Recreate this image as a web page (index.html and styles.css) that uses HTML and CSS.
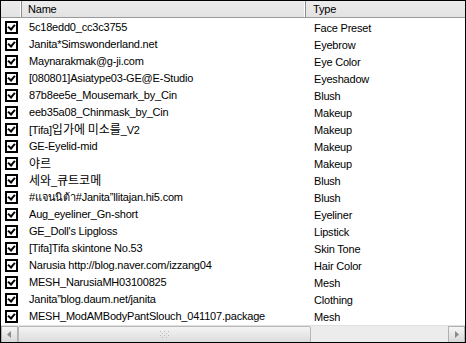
FILE: index.html
```html
<!DOCTYPE html>
<html lang="en">
<head>
    <meta charset="UTF-8">
    <title>Package list</title>
    <link rel="stylesheet" href="styles.css">
</head>
<body>
    <div class="listview">
        <div class="header">
            <div class="col col-check"></div>
            <div class="col col-name">Name</div>
            <div class="col col-type">Type</div>
        </div>

        <div class="rows">
            <div class="row"><span class="box"></span><span class="name">5c18edd0_cc3c3755</span><span class="type">Face Preset</span></div>
            <div class="row"><span class="box"></span><span class="name">Janita*Simswonderland.net</span><span class="type">Eyebrow</span></div>
            <div class="row"><span class="box"></span><span class="name">Maynarakmak@g-ji.com</span><span class="type">Eye Color</span></div>
            <div class="row"><span class="box"></span><span class="name">[080801]Asiatype03-GE@E-Studio</span><span class="type">Eyeshadow</span></div>
            <div class="row"><span class="box"></span><span class="name">87b8ee5e_Mousemark_by_Cin</span><span class="type">Blush</span></div>
            <div class="row"><span class="box"></span><span class="name">eeb35a08_Chinmask_by_Cin</span><span class="type">Makeup</span></div>
            <div class="row"><span class="box"></span><span class="name">[Tifa]<span class="ko">입가에 미소를</span>_V2</span><span class="type">Makeup</span></div>
            <div class="row"><span class="box"></span><span class="name">GE-Eyelid-mid</span><span class="type">Makeup</span></div>
            <div class="row"><span class="box"></span><span class="name"><span class="ko">야르</span></span><span class="type">Makeup</span></div>
            <div class="row"><span class="box"></span><span class="name"><span class="ko">세와</span>_<span class="ko">큐트코메</span></span><span class="type">Blush</span></div>
            <div class="row"><span class="box"></span><span class="name">#แจนนิต้า#Janita”llitajan.hi5.com</span><span class="type">Blush</span></div>
            <div class="row"><span class="box"></span><span class="name">Aug_eyeliner_Gn-short</span><span class="type">Eyeliner</span></div>
            <div class="row"><span class="box"></span><span class="name">GE_Doll's Lipgloss</span><span class="type">Lipstick</span></div>
            <div class="row"><span class="box"></span><span class="name">[Tifa]Tifa skintone No.53</span><span class="type">Skin Tone</span></div>
            <div class="row"><span class="box"></span><span class="name">Narusia http://blog.naver.com/izzang04</span><span class="type">Hair Color</span></div>
            <div class="row"><span class="box"></span><span class="name">MESH_NarusiaMH03100825</span><span class="type">Mesh</span></div>
            <div class="row"><span class="box"></span><span class="name">Janita”blog.daum.net/janita</span><span class="type">Clothing</span></div>
            <div class="row"><span class="box"></span><span class="name">MESH_ModAMBodyPantSlouch_041107.package</span><span class="type">Mesh</span></div>
        </div>

        <div class="hscroll">
            <div class="sbtn">
                <svg width="17" height="17" viewBox="0 0 17 17"><path d="M10 5 L6 8.5 L10 12 Z" fill="#8a8a8a"/></svg>
            </div>
            <div class="thumb">
                <svg width="9" height="8" viewBox="0 0 9 8">
                    <g fill="#b8b8b8">
                        <rect x="0" y="0" width="1" height="1"/><rect x="4" y="0" width="1" height="1"/><rect x="8" y="0" width="1" height="1"/>
                        <rect x="2" y="2" width="1" height="1"/><rect x="6" y="2" width="1" height="1"/>
                        <rect x="0" y="4" width="1" height="1"/><rect x="4" y="4" width="1" height="1"/><rect x="8" y="4" width="1" height="1"/>
                        <rect x="2" y="6" width="1" height="1"/><rect x="6" y="6" width="1" height="1"/>
                    </g>
                </svg>
            </div>
            <div class="track"></div>
            <div class="sbtn">
                <svg width="17" height="17" viewBox="0 0 17 17"><path d="M7 5 L11 8.5 L7 12 Z" fill="#8a8a8a"/></svg>
            </div>
        </div>
    </div>
</body>
</html>
```

FILE: styles.css
```css
body {
    margin: 0;
    background: #fff;
    font-family: "Liberation Sans", Arial, "Noto Sans CJK KR", sans-serif;
    font-size: 11px;
    letter-spacing: -0.2px;
    color: #000;
}
.listview {
    width: 466px;
    height: 343px;
    box-sizing: border-box;
    border: 1px solid #000;
    display: flex;
    flex-direction: column;
    overflow: hidden;
}
.header {
    display: grid;
    grid-template-columns: 21px 284px 1fr;
    height: 17px;
    box-sizing: border-box;
    background: linear-gradient(#ececec, #e2e2e2);
    border-bottom: 1px solid #9a9a9a;
    flex: none;
}
.col {
    line-height: 16px;
    padding-left: 6px;
    border-right: 1px solid #8c8c8c;
    box-shadow: inset -1px 0 0 #fff;
    white-space: nowrap;
}
.col-check {
    padding-left: 0;
}
.col-type {
    padding-left: 7px;
    border-right: none;
    box-shadow: none;
}
.rows {
    flex: 1;
    padding-top: 1px;
}
.row {
    display: grid;
    grid-template-columns: 22px 284px 1fr;
    height: 17px;
    align-items: center;
    white-space: nowrap;
}
.box {
    width: 9px;
    height: 9px;
    margin-left: 4px;
    border: 2px solid #000;
    background: #fff;
    position: relative;
}
.box::after {
    content: "";
    position: absolute;
    left: 1px;
    top: 0;
    width: 3px;
    height: 5px;
    border-right: 2px solid #000;
    border-bottom: 2px solid #000;
    transform: translate(1px, 0) rotate(40deg);
}
.name {
    padding-left: 6px;
    overflow: hidden;
    line-height: 17px;
}
.ko {
    font-family: "Noto Sans CJK KR", sans-serif;
    font-size: 12px;
    letter-spacing: 0;
}
.type {
    padding-left: 7px;
}
.hscroll {
    display: flex;
    height: 17px;
    flex: none;
    background: #eeeeee;
    border-top: 1px solid #e0e0e0;
}
.sbtn {
    width: 17px;
    height: 17px;
    flex: none;
    background: linear-gradient(#f6f6f6, #d8d8d8);
    border: 1px solid #b0b0b0;
    box-sizing: border-box;
}
.sbtn svg {
    display: block;
    margin: -1px;
}
.thumb {
    width: 293px;
    flex: none;
    box-sizing: border-box;
    border: 1px solid #b8b8b8;
    border-radius: 2px;
    background: linear-gradient(#f4f4f4, #dcdcdc);
    display: flex;
    align-items: center;
    justify-content: center;
}
.track {
    flex: 1;
    background: #ececec;
}
```
